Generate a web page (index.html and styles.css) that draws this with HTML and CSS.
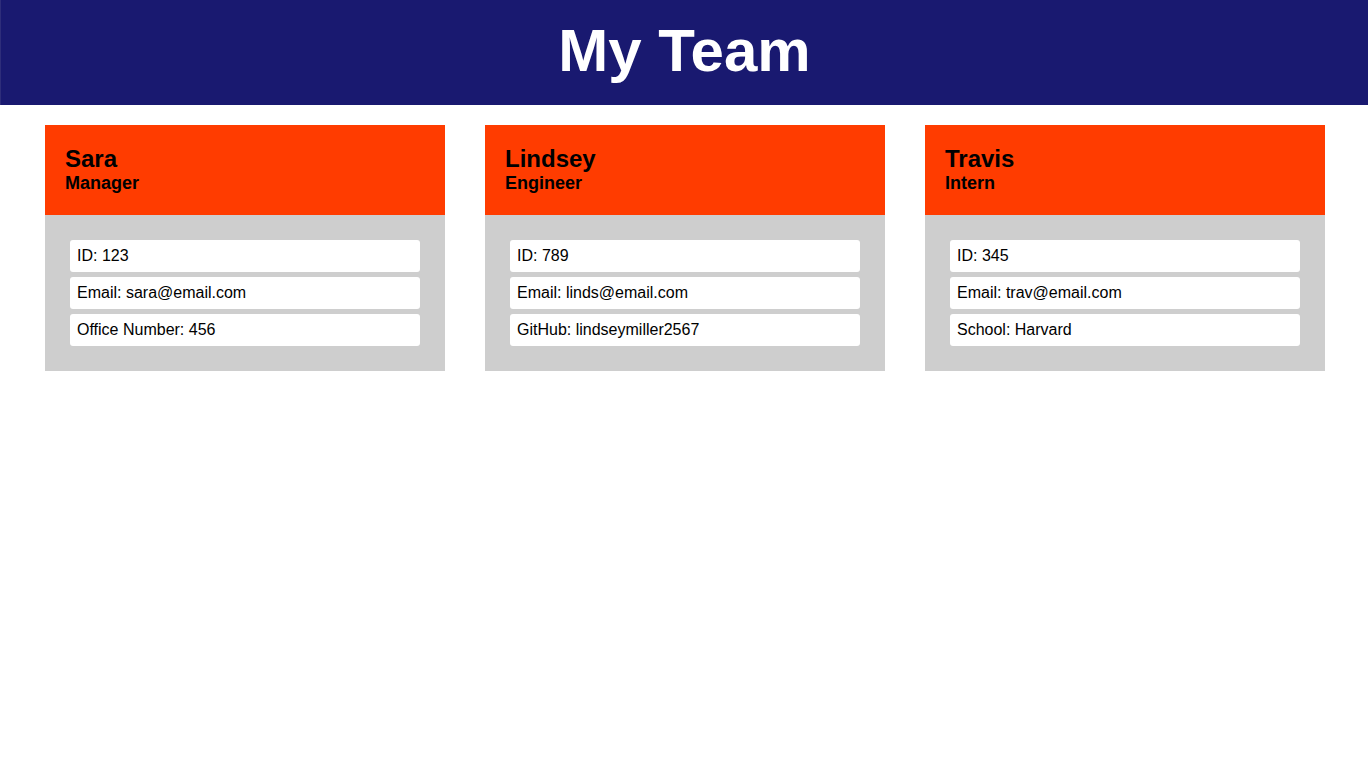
FILE: index.html
```html
<!DOCTYPE html>
<html lang="en">
<head>
<meta charset="utf-8">
<title>My Team</title>
<link rel="stylesheet" href="styles.css">
</head>
<body>
<header class="banner">
  <h1 class="banner-title">My Team</h1>
</header>
<main class="team">
  <section class="card">
    <div class="card-head">
      <h2 class="card-name">Sara</h2>
      <h3 class="card-role">Manager</h3>
    </div>
    <ul class="card-body">
      <li class="card-item">ID: 123</li>
      <li class="card-item">Email: sara@email.com</li>
      <li class="card-item">Office Number: 456</li>
    </ul>
  </section>
  <section class="card">
    <div class="card-head">
      <h2 class="card-name">Lindsey</h2>
      <h3 class="card-role">Engineer</h3>
    </div>
    <ul class="card-body">
      <li class="card-item">ID: 789</li>
      <li class="card-item">Email: linds@email.com</li>
      <li class="card-item">GitHub: lindseymiller2567</li>
    </ul>
  </section>
  <section class="card">
    <div class="card-head">
      <h2 class="card-name">Travis</h2>
      <h3 class="card-role">Intern</h3>
    </div>
    <ul class="card-body">
      <li class="card-item">ID: 345</li>
      <li class="card-item">Email: trav@email.com</li>
      <li class="card-item">School: Harvard</li>
    </ul>
  </section>
</main>
</body>
</html>
```
FILE: styles.css
```css
* { box-sizing: border-box; }
html, body {
  margin: 0;
  padding: 0;
  background: #ffffff;
  font-family: "Liberation Sans", Arial, Helvetica, sans-serif;
  color: #000;
}
.banner {
  height: 105px;
  background: #191970;
  display: flex;
  align-items: center;
  justify-content: center;
  border-left: 1px solid #2e2d7a;
}
.banner-title {
  margin: 0;
  color: #fff;
  font-size: 60px;
  font-weight: bold;
  line-height: 1;
  padding-bottom: 4px;
}
.team {
  display: flex;
  gap: 40px;
  padding: 20px 0 0 45px;
}
.card {
  width: 400px;
  flex: none;
}
.card-head {
  height: 90px;
  background: #ff3c00;
  padding: 19px 20px 0;
}
.card-name {
  margin: 0;
  font-size: 24px;
  font-weight: bold;
  line-height: 29px;
}
.card-role {
  margin: 0;
  font-size: 18px;
  font-weight: bold;
  line-height: 21px;
}
.card-body {
  list-style: none;
  margin: 0;
  padding: 25px;
  background: #cecece;
  display: flex;
  flex-direction: column;
  gap: 5px;
}
.card-item {
  background: #fff;
  border-radius: 3px;
  padding: 7px 7px;
  font-size: 16px;
  line-height: 18px;
}
```
